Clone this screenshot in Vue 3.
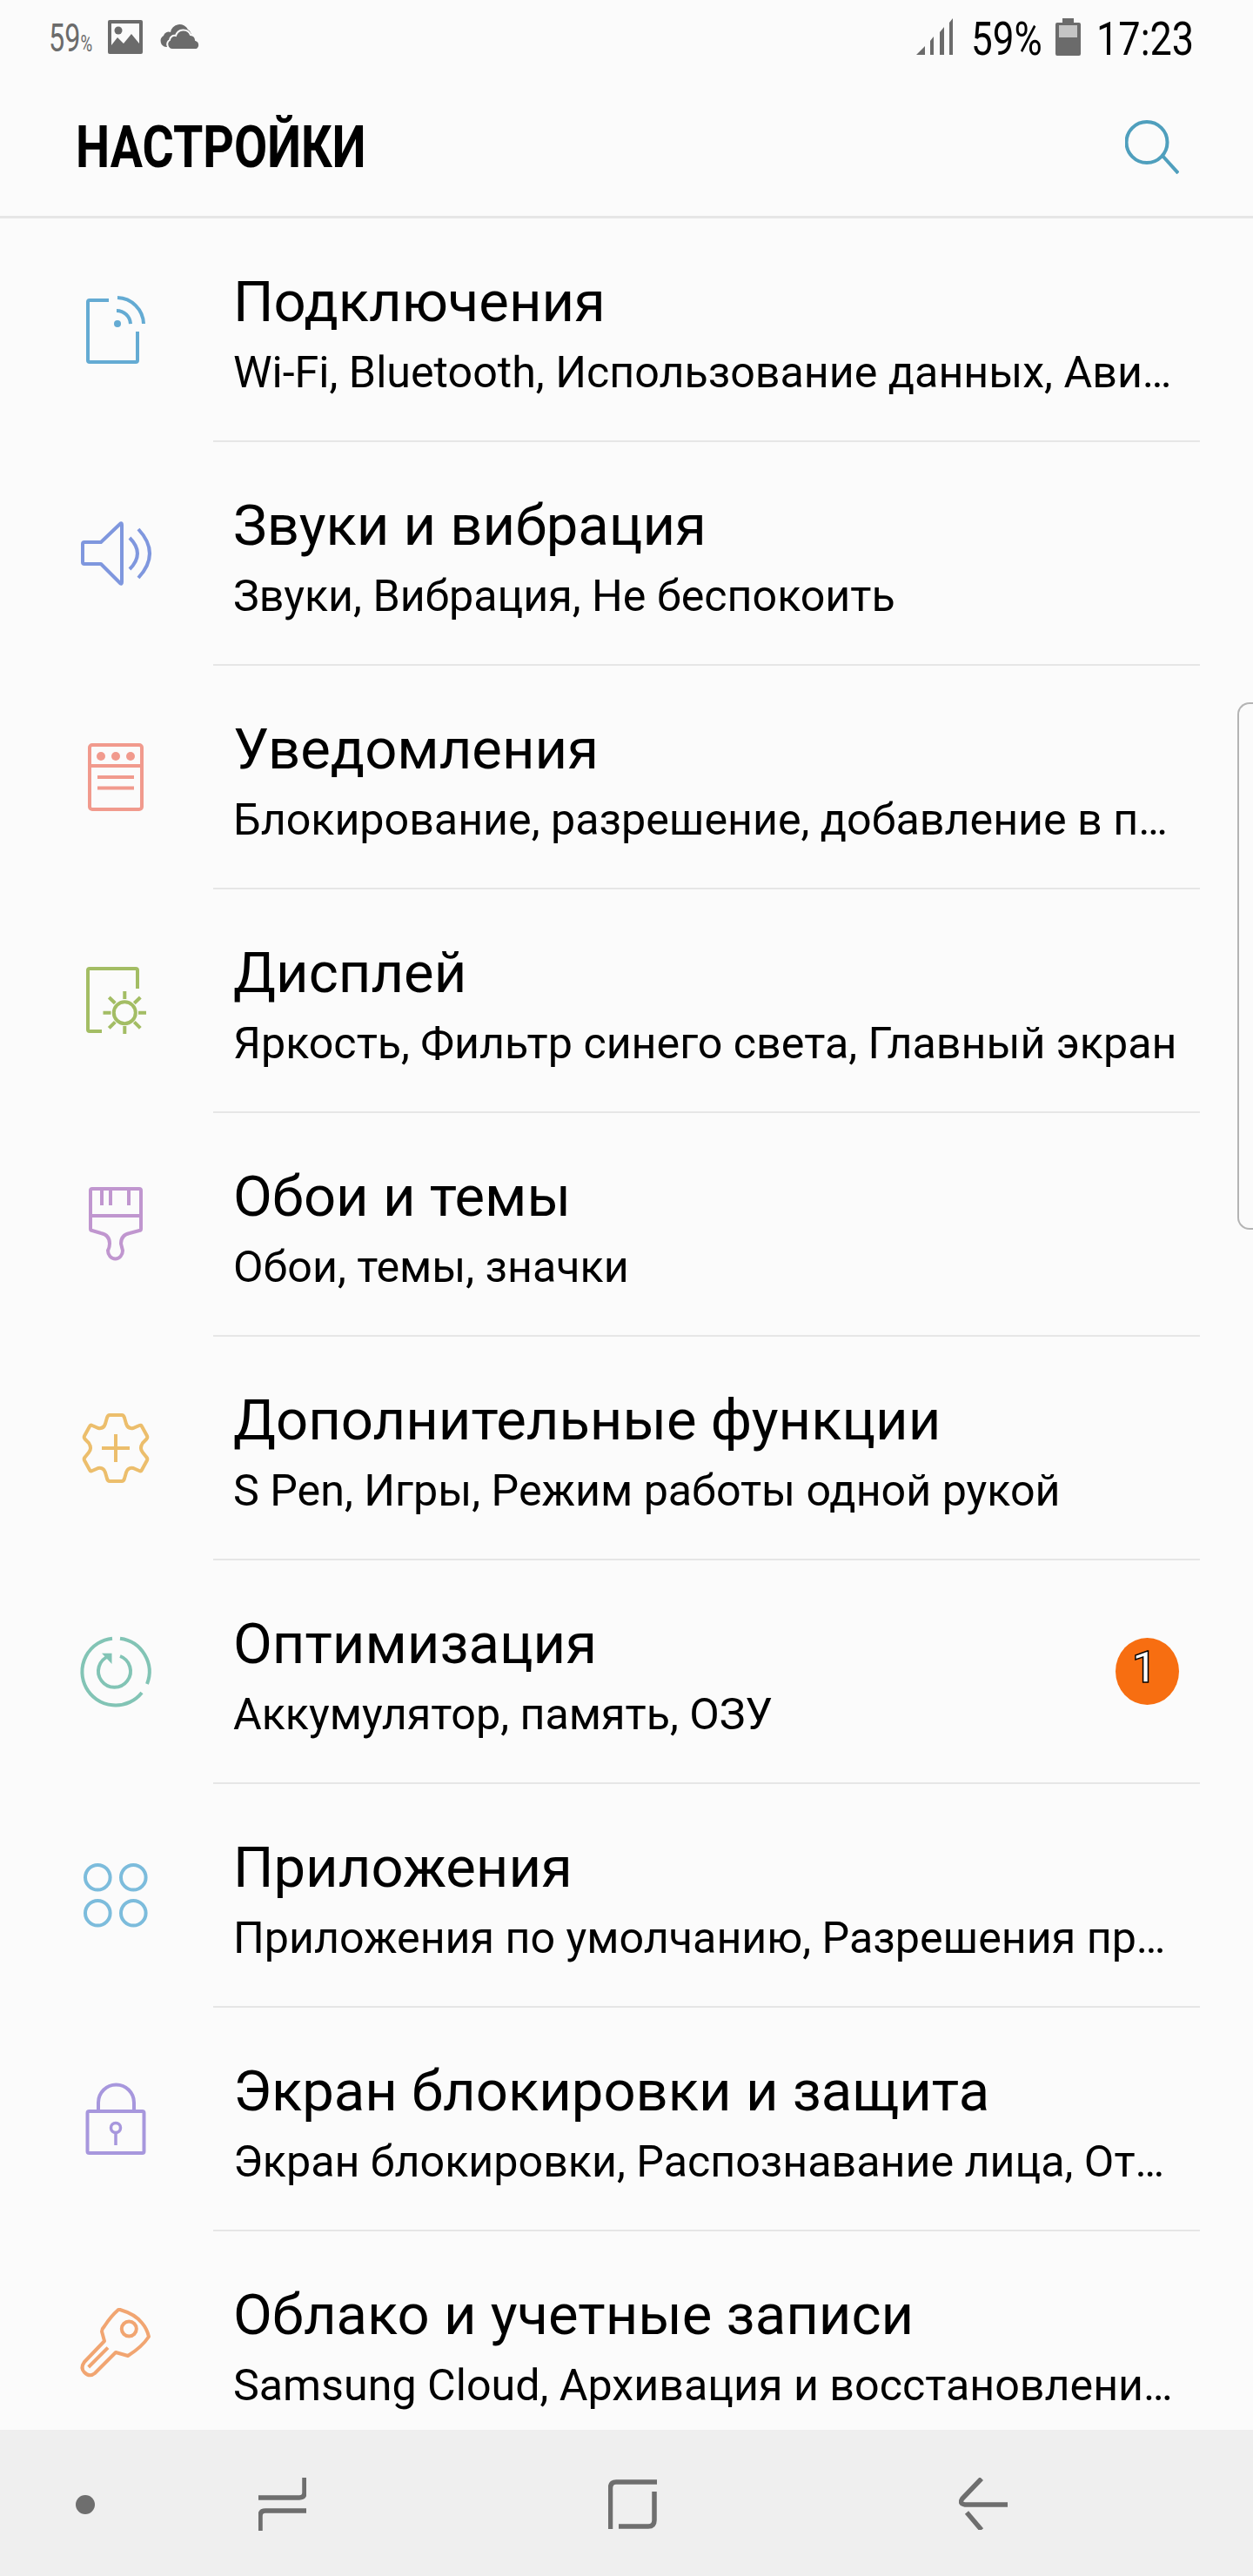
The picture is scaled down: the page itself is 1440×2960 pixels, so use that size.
<template>
  <div class="screen">
    <!-- status bar -->
    <div class="status">
      <div class="status-left">
        <span class="pct-small">59<small>%</small></span>
        <svg class="st-pic" width="40" height="39" viewBox="0 0 40 39">
          <rect width="40" height="39" rx="2" fill="#6b6b6b" />
          <rect x="4" y="4" width="32" height="31" fill="#fbfbfb" />
          <circle cx="12" cy="12" r="4.5" fill="#6b6b6b" />
          <path d="M4 29l7-9 7 7 9-11 9 11v8H4z" fill="#6b6b6b" />
        </svg>
        <svg class="st-cloud" width="49" height="31" viewBox="0 0 49 31">
          <path d="M8 27a7 7 0 0 1-3-13 6 6 0 0 1 8-4 10.500 10 0 0 1 20-3 9 9 0 0 1 4 7v13z" fill="#6b6b6b" />
          <path d="M15 30a6 6 0 0 1-3-11 5.500 5.500 0 0 1 7-5 9 9 0 0 1 17-1 6.500 6.500 0 0 1 6 6 6 6 0 0 1 1 11z" fill="#6b6b6b" stroke="#fbfbfb" stroke-width="2" />
        </svg>
      </div>
      <div class="status-right">
        <svg class="st-signal" width="42" height="42" viewBox="0 0 42 42">
          <path d="M0 42l10-10v10zM16 42V26l4-5v21zM27 42V16l5-6v32zM38 42V5l4-5v42z" fill="#6b6b6b" />
        </svg>
        <span class="st-text st-pct">59%</span>
        <svg class="st-batt" width="29" height="43" viewBox="0 0 29 43">
          <path d="M8 0h13v5h6a2 2 0 0 1 2 2v34a2 2 0 0 1-2 2H2a2 2 0 0 1-2-2V7a2 2 0 0 1 2-2h6z" fill="#6b6b6b" />
          <rect x="4" y="8" width="21" height="14" fill="#c4c4c4" />
        </svg>
        <span class="st-text st-time">17:23</span>
      </div>
    </div>

    <!-- title bar -->
    <header class="topbar">
      <h1>НАСТРОЙКИ</h1>
      <svg class="search" width="62" height="62" viewBox="0 0 62 62" fill="none" stroke="#4f9fbd" stroke-width="4">
        <circle cx="25" cy="25.500" r="23.500" />
        <path d="M43 41l18 20" />
      </svg>
    </header>

    <!-- settings list -->
    <div class="list">
      <div class="row" v-for="row in rows" :key="row.title">
        <div class="row-icon" v-html="row.icon"></div>
        <div class="row-body">
          <div class="row-text">
            <div class="row-title">{{ row.title }}</div>
            <div class="row-sub">{{ row.sub }}</div>
          </div>
          <span class="badge" v-if="row.badge">{{ row.badge }}</span>
        </div>
      </div>
      <div class="edge"></div>
    </div>

    <!-- soft keys -->
    <nav class="softkeys">
      <span class="dot"></span>
      <svg class="key-recent" width="55" height="61" viewBox="0 0 55 61" fill="none" stroke="#6e6e6e" stroke-width="5.500">
        <path d="M0 23h47q6 0 6-6V0" />
        <path d="M55 38H8q-6 0-6 6v17" />
      </svg>
      <svg class="key-home" width="57" height="57" viewBox="0 0 57 57" fill="none" stroke="#6e6e6e" stroke-width="5.500">
        <path d="M56 3H9q-6.500 0-6.500 7v47" />
        <path d="M53 14v33q0 7-7 7H12" />
      </svg>
      <svg class="key-back" width="56" height="60" viewBox="0 0 56 60" fill="none" stroke="#6e6e6e" stroke-width="5.500">
        <path d="M26 1L4 24q-4 6 3 7h49" />
        <path d="M9 40l17 20" />
      </svg>
    </nav>
  </div>
</template>

<script setup>
const svg = (color, body) =>
  `<svg width="100" height="100" viewBox="0 0 100 100" fill="none" stroke="${color}" stroke-width="4">${body}</svg>`;

const rows = [
  {
    title: "Подключения",
    sub: "Wi-Fi, Bluetooth, Использование данных, Ави…",
    icon: svg("#64abd3", `
      <path d="M42 16H20a2 2 0 0 0-2 2v67a2 2 0 0 0 2 2h53a2 2 0 0 0 2-2V52" />
      <path d="M52 13a31 31 0 0 1 30 30" />
      <path d="M51 28a16 16 0 0 1 16 15" />
      <circle cx="52" cy="43" r="4" fill="#64abd3" stroke="none" />`),
  },
  {
    title: "Звуки и вибрация",
    sub: "Звуки, Вибрация, Не беспокоить",
    icon: svg("#7f97de", `
      <path d="M14 37h19l22-21q2-2 2 1v66q0 3-2 1L33 62H14a2 2 0 0 1-2-2V39a2 2 0 0 1 2-2z" stroke-linejoin="round" />
      <path d="M66 32q18 18 0 36" />
      <path d="M76 22q26 28 0 56" />`),
  },
  {
    title: "Уведомления",
    sub: "Блокирование, разрешение, добавление в п…",
    icon: svg("#f19a8d", `
      <rect x="20" y="13" width="60" height="74" rx="3" />
      <path d="M20 37h60M29 50h42M29 62.500h42" />
      <circle cx="33" cy="26" r="5" fill="#f19a8d" stroke="none" />
      <circle cx="50" cy="26" r="5" fill="#f19a8d" stroke="none" />
      <circle cx="67" cy="26" r="5" fill="#f19a8d" stroke="none" />`),
  },
  {
    title: "Дисплей",
    sub: "Яркость, Фильтр синего света, Главный экран",
    icon: svg("#a3bd64", `
      <path d="M34 85H20a2 2 0 0 1-2-2V15a2 2 0 0 1 2-2h53a2 2 0 0 1 2 2v21" />
      <circle cx="60.300" cy="63.700" r="12.500" />
      <path d="M60.300 39v9M60.300 79v9M35.500 63.700h9M76 63.700h9M42.300 46l7 6.700M78.300 46l-7 6.700M42.300 81.300l7-7M78.300 81.300l-7-7" />`),
  },
  {
    title: "Обои и темы",
    sub: "Обои, темы, значки",
    icon: svg("#c096cf", `
      <path d="M23 9h54a2 2 0 0 1 2 2v44q0 2-2 2l-11 3q-10 2-10 12 1 4 2 8a8.500 9.500 0 1 1-17 0q2-4 2-8 0-10-10-12l-10-3q-2 0-2-2V11a2 2 0 0 1 2-2z" />
      <path d="M21 40h58M34 9v19M44 9v19M65 9v19" />`),
  },
  {
    title: "Дополнительные функции",
    sub: "S Pen, Игры, Режим работы одной рукой",
    icon: svg("#ecbe6c", `
      <path d="M43 12H57Q59 12 60 15L62 22Q64 28 70 27L77 24Q79 23 80 25L86 36Q87 38 85 40L81 44Q77 50 81 55L85 60Q87 62 86 64L80 75Q79 77 77 76L70 73Q64 72 62 78L60 85Q59 88 57 88H43Q41 88 40 85L38 78Q36 72 30 73L23 76Q21 77 20 75L14 64Q13 62 15 60L19 55Q23 50 19 44L15 40Q13 38 14 36L20 25Q21 23 23 24L30 27Q36 28 38 22L40 15Q41 12 43 12z" />
      <path d="M50 34v32M34 50h32" />`),
  },
  {
    title: "Оптимизация",
    sub: "Аккумулятор, память, ОЗУ",
    badge: "1",
    icon: svg("#82c4b5", `
      <path d="M46 11.700A38.500 38.500 0 1 0 80 74" />
      <path d="M55 11.800A38.500 38.500 0 0 1 86 64" />
      <path d="M55 32A18.500 18.500 0 1 1 42 32" />
      <path d="M34 28.700h11.500V41z" fill="#82c4b5" stroke="none" />`),
  },
  {
    title: "Приложения",
    sub: "Приложения по умолчанию, Разрешения пр…",
    icon: svg("#7cbcdc", `
      <circle cx="29.300" cy="29.300" r="14.300" />
      <circle cx="70.300" cy="29.300" r="14.300" />
      <circle cx="29.300" cy="70.300" r="14.300" />
      <circle cx="70.300" cy="70.300" r="14.300" />`),
  },
  {
    title: "Экран блокировки и защита",
    sub: "Экран блокировки, Распознавание лица, От…",
    icon: svg("#a797dd", `
      <rect x="17.500" y="41" width="65" height="48" rx="2" />
      <path d="M30 41V31a20.500 20.500 0 0 1 41 0v10" />
      <circle cx="50" cy="60" r="5.500" stroke-width="3.500" />
      <path d="M50 65v15" stroke-width="3.500" />`),
  },
  {
    title: "Облако и учетные записи",
    sub: "Samsung Cloud, Архивация и восстановлени…",
    icon: svg("#f1a571", `
      <path d="M55 12Q72 17 80 27Q86 34 88 43Q80 55 64 65L50 61L26 85Q20 90 14 84Q9 79 14 72L37 48L34 37Q34 34 37 31Q44 20 53 12z" stroke-linejoin="round" />
      <circle cx="65.300" cy="34" r="8.500" />
      <path d="M41 55.700L18.700 78" />`),
  },
];
</script>

<style>
html,
body {
  margin: 0;
  background: #fbfbfb;
}
</style>

<style scoped>
.screen {
  position: relative;
  width: 1440px;
  height: 2960px;
  background: #fbfbfb;
  font-family: Roboto, "Noto Sans", sans-serif;
  color: #000;
  overflow: hidden;
  display: flex;
  flex-direction: column;
}

.status {
  height: 78px;
  padding: 15px 67px 0 56px;
  display: flex;
  justify-content: space-between;
  box-sizing: border-box;
  flex-shrink: 0;
}

.status-left {
  display: flex;
  align-items: flex-start;
}

.pct-small {
  font-size: 45px;
  line-height: 50px;
  color: #6b6b6b;
  width: 50px;
  margin-top: 4px;
  transform: scaleX(0.72);
  transform-origin: left;
  white-space: nowrap;
}

.pct-small small {
  font-size: 26px;
}

.st-pic {
  margin: 8px 0 0 18px;
}

.st-cloud {
  margin: 12px 0 0 19px;
}

.status-right {
  display: flex;
  align-items: flex-start;
}

.st-signal {
  margin-top: 6px;
}

.st-batt {
  margin: 6px 0 0 15px;
}

.st-text {
  font-size: 53px;
  line-height: 58px;
  margin-top: 1px;
  transform: scaleX(0.83);
  transform-origin: left;
  white-space: nowrap;
}

.st-pct {
  width: 82px;
  margin-left: 21px;
}

.st-time {
  width: 113px;
  margin-left: 18px;
  transform: scaleX(0.85);
}

.topbar {
  height: 173px;
  box-sizing: border-box;
  display: flex;
  align-items: flex-start;
  justify-content: space-between;
  padding: 0 85px 0 87px;
  border-bottom: 3px solid #e6e6e6;
  flex-shrink: 0;
}

.topbar h1 {
  margin: 59px 0 0;
  font-size: 66px;
  line-height: 1;
  font-weight: 700;
  transform: scaleX(0.84);
  transform-origin: left;
  white-space: nowrap;
}

.search {
  margin-top: 60px;
}

.list {
  flex: 1;
  min-height: 0;
  position: relative;
  overflow: hidden;
}

.row {
  height: 257px;
  display: flex;
}

.row-icon {
  width: 245px;
  flex-shrink: 0;
  padding: 78px 0 0 83px;
  box-sizing: border-box;
}

.row-icon :deep(svg) {
  display: block;
}

.row-body {
  flex: 1;
  margin-right: 61px;
  display: flex;
  align-items: center;
  border-bottom: 2px solid #e6e6e6;
  padding: 0 24px 0 23px;
  min-width: 0;
}

.row:last-of-type .row-body {
  border-bottom: none;
}

.row-text {
  flex: 1;
  min-width: 0;
  align-self: flex-start;
  padding-top: 56px;
}

.row-title {
  font-size: 65.2px;
  line-height: 80px;
  white-space: nowrap;
}

.row-sub {
  font-size: 50.2px;
  line-height: 68px;
  margin-top: 7px;
  white-space: nowrap;
}

.badge {
  width: 73px;
  height: 77px;
  box-sizing: border-box;
  padding: 0 7px 9px 0;
  border-radius: 50%;
  background: #f76e11;
  color: #fff;
  font-size: 50px;
  font-weight: 500;
  display: flex;
  align-items: center;
  justify-content: center;
  -webkit-text-stroke: 1.5px #000;
  flex-shrink: 0;
}

.edge {
  position: absolute;
  right: 0;
  top: 556px;
  width: 18px;
  height: 606px;
  box-sizing: border-box;
  border: 2px solid #b4b4b4;
  border-right: none;
  border-radius: 14px 0 0 14px;
}

.softkeys {
  height: 168px;
  flex-shrink: 0;
  background: #efefef;
  display: flex;
  align-items: flex-start;
}

.dot {
  width: 22px;
  height: 22px;
  border-radius: 50%;
  background: #6e6e6e;
  margin: 75px 0 0 87px;
}

.key-recent {
  margin: 55px 0 0 188px;
}

.key-home {
  margin: 57px 0 0 347px;
}

.key-back {
  margin: 55px 0 0 346px;
}
</style>
